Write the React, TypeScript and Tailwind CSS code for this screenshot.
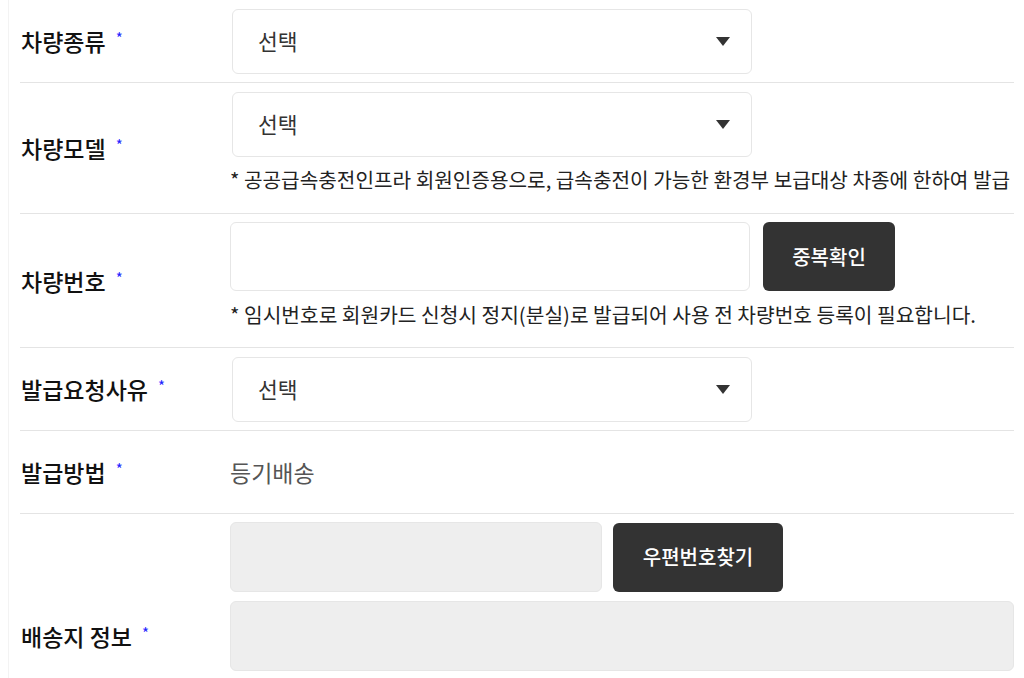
import React from 'react';

const FONT = "font-['Noto_Sans_CJK_KR','Noto_Sans',sans-serif]";

function Label({ text }: { text: string }) {
  return (
    <div className="w-[210px] shrink-0 flex items-start pl-px">
      <span className="text-[23px] leading-[30px] font-medium text-[#111]">{text}</span>
      <span className="ml-[10px] mt-[4px] text-[15px] leading-[16px] text-[#1f1fff]">*</span>
    </div>
  );
}

function SelectBox() {
  return (
    <div className="ml-[2px] w-[520px] h-[65px] flex items-center justify-between pl-[25px] pr-[21px] border border-[#e6e6e6] rounded-md bg-white">
      <span className="text-[21.5px] text-[#333]">선택</span>
      <svg width="14" height="9" viewBox="0 0 14 9">
        <polygon points="0,0 14,0 7,9" fill="#333" />
      </svg>
    </div>
  );
}

function DarkButton({ text, w }: { text: string; w: string }) {
  return (
    <button className={`${w} h-[69px] shrink-0 rounded-md bg-[#333333] text-white text-[20px] font-medium`}>
      {text}
    </button>
  );
}

function GrayInput({ w }: { w: string }) {
  return (
    <input
      className={`${w} h-[70px] border border-[#e6e6e6] rounded-md bg-[#eeeeee] px-4 outline-none`}
      type="text"
      disabled
    />
  );
}

export default function App() {
  return (
    <div className={`${FONT} h-[678px] overflow-hidden bg-white pl-2 pr-[10px]`}>
      <div className="border-l border-[#f3f3f3] pl-[11px]">
        {/* 차량종류 */}
        <div className="flex items-center border-b border-[#e4e4e4]">
          <Label text="차량종류" />
          <div className="pt-[9px] pb-[8px]">
            <SelectBox />
          </div>
        </div>

        {/* 차량모델 */}
        <div className="flex items-center border-b border-[#e4e4e4]">
          <Label text="차량모델" />
          <div className="flex-1 min-w-0 overflow-hidden pt-[9px] pb-[19px]">
            <SelectBox />
            <p className="mt-[9px] text-[20.2px] leading-[28px] text-[#222] whitespace-nowrap">
              * 공공급속충전인프라 회원인증용으로, 급속충전이 가능한 환경부 보급대상 차종에 한하여 발급
            </p>
          </div>
        </div>

        {/* 차량번호 */}
        <div className="flex items-center border-b border-[#e4e4e4]">
          <Label text="차량번호" />
          <div className="flex-1 min-w-0 overflow-hidden pt-[8px] pb-[19px]">
            <div className="flex items-center gap-[13px]">
              <input
                className="w-[520px] h-[69px] border border-[#e6e6e6] rounded-md bg-white px-4 outline-none"
                type="text"
              />
              <DarkButton text="중복확인" w="w-[132px]" />
            </div>
            <p className="mt-[9px] text-[20.3px] leading-[28px] text-[#222] whitespace-nowrap">
              * 임시번호로 회원카드 신청시 정지(분실)로 발급되어 사용 전 차량번호 등록이 필요합니다.
            </p>
          </div>
        </div>

        {/* 발급요청사유 */}
        <div className="flex items-center border-b border-[#e4e4e4]">
          <Label text="발급요청사유" />
          <div className="pt-[9px] pb-[7px]">
            <div className="h-[66px] flex">
              <SelectBox />
            </div>
          </div>
        </div>

        {/* 발급방법 */}
        <div className="flex items-center h-[83px] border-b border-[#e4e4e4]">
          <Label text="발급방법" />
          <span className="text-[23px] text-[#555]">등기배송</span>
        </div>

        {/* 배송지 정보 */}
        <div className="flex items-center border-b border-[#e4e4e4]">
          <Label text="배송지 정보" />
          <div className="flex-1 min-w-0 flex flex-col gap-[9px] pt-[8px] pb-[8px]">
            <div className="flex items-center gap-[11px]">
              <GrayInput w="w-[372px]" />
              <DarkButton text="우편번호찾기" w="w-[170px]" />
            </div>
            <GrayInput w="w-full" />
            <input
              className="w-full h-[70px] border border-[#e6e6e6] rounded-md bg-white px-4 outline-none"
              type="text"
            />
          </div>
        </div>
      </div>
    </div>
  );
}
